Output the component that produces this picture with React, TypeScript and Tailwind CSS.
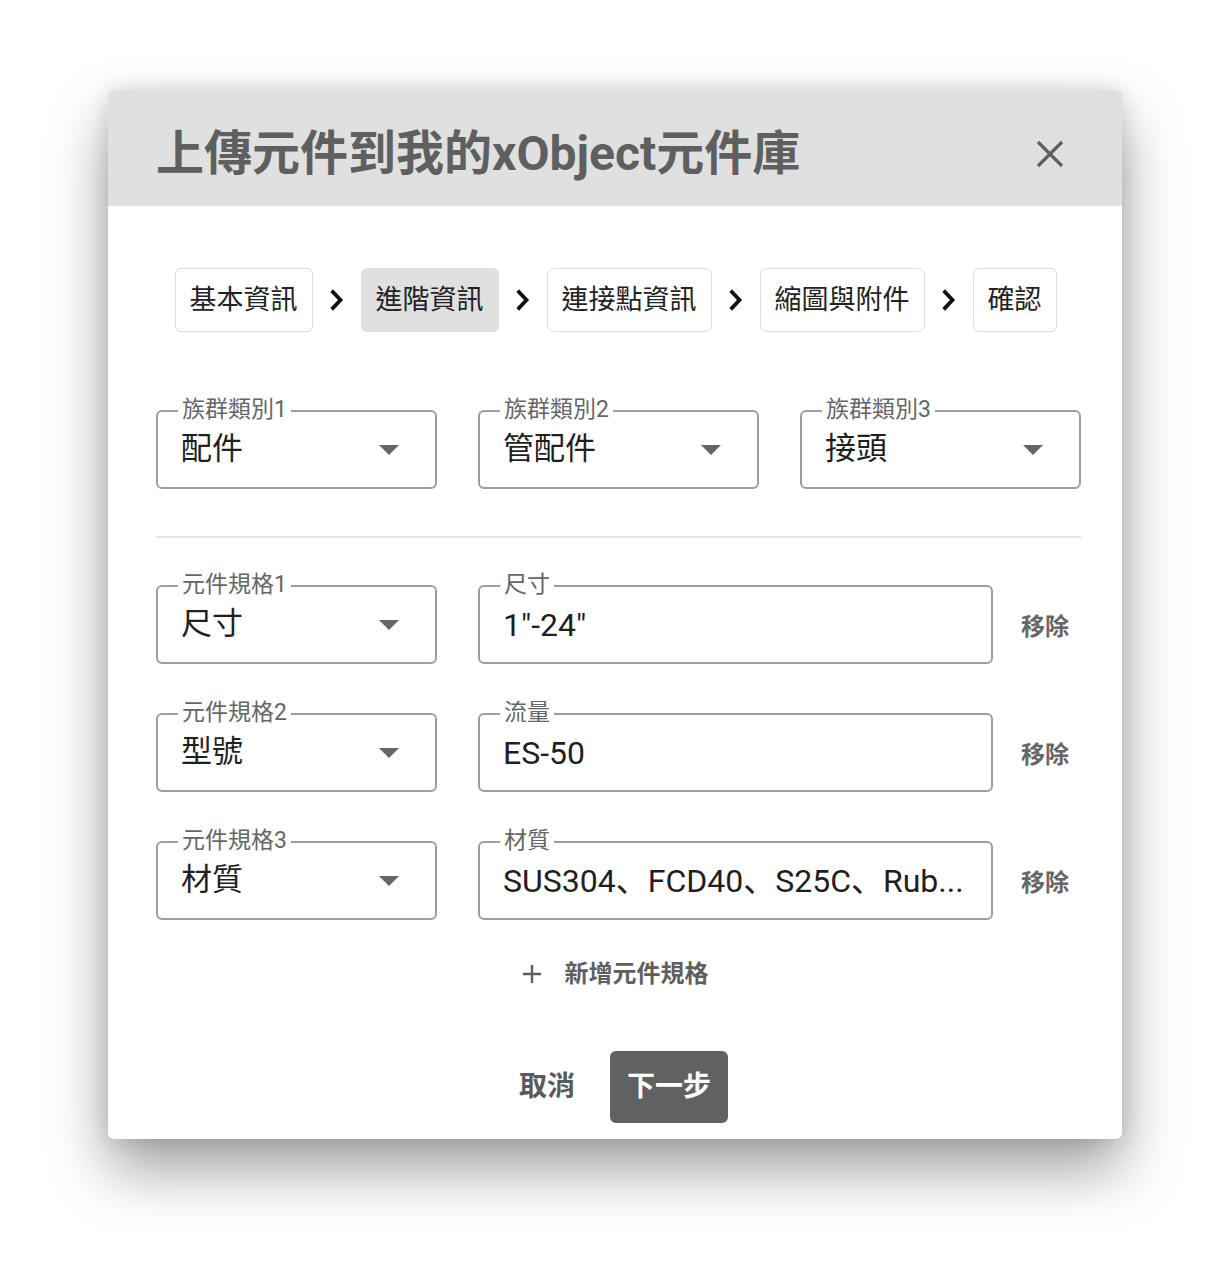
import React from "react";

const font = { fontFamily: 'Roboto, "Noto Sans CJK TC", sans-serif' };

const steps = ["基本資訊", "進階資訊", "連接點資訊", "縮圖與附件", "確認"];

function Chevron() {
  return (
    <svg width="14" height="22" viewBox="0 0 14 22" className="shrink-0">
      <path d="M3 3 L10.5 11 L3 19" fill="none" stroke="#111" strokeWidth="3.8" strokeLinecap="square" />
    </svg>
  );
}

function Caret() {
  return (
    <svg width="20" height="10" viewBox="0 0 20 10" className="shrink-0">
      <path d="M0 0 L20 0 L10 10 Z" fill="#666" />
    </svg>
  );
}

function SelectBox({ label, value }: { label: string; value: string }) {
  return (
    <div className="relative flex h-[79px] w-[281px] shrink-0 items-center justify-between rounded-md border-2 border-[#9e9e9e] pl-[23px] pr-[36px]">
      <span className="absolute -top-[16px] left-[20px] bg-white px-[4px] text-[23px] leading-[28px] text-[#666]">{label}</span>
      <span className="text-[31px] text-[#1f1f1f]">{value}</span>
      <Caret />
    </div>
  );
}

function TextBox({ label, value, jp }: { label: string; value: string; jp?: boolean }) {
  return (
    <div className="relative flex h-[79px] w-[515px] shrink-0 items-center rounded-md border-2 border-[#9e9e9e] pl-[23px] pr-[23px]">
      <span className="absolute -top-[16px] left-[20px] bg-white px-[4px] text-[23px] leading-[28px] text-[#666]">{label}</span>
      <span
        className="truncate text-[32px] text-[#1f1f1f]"
        style={jp ? { fontFamily: 'Roboto, "Noto Sans CJK JP", sans-serif' } : undefined}
      >
        {value}
      </span>
    </div>
  );
}

const specs = [
  { label: "元件規格1", value: "尺寸", field: "尺寸", text: '1"-24"' },
  { label: "元件規格2", value: "型號", field: "流量", text: "ES-50" },
  { label: "元件規格3", value: "材質", field: "材質", text: "SUS304、FCD40、S25C、Rub...", jp: true },
];

export default function App() {
  return (
    <div className="min-h-[1268px] bg-white pt-[90px]" style={font}>
      <div className="mx-auto w-[1014px] overflow-hidden rounded-md bg-white shadow-[0_30px_60px_rgba(0,0,0,0.38),0_0_20px_rgba(0,0,0,0.12)]">
        <div className="flex h-[116px] items-center justify-between bg-[#e0e0e0] pl-[48px] pr-[57px] pt-[12px]">
          <h1 className="text-[48px] font-bold text-[#5f5f5f]">上傳元件到我的xObject元件庫</h1>
          <svg width="30" height="30" viewBox="0 0 30 30">
            <path d="M3 3 L27 27 M27 3 L3 27" stroke="#5f5f5f" strokeWidth="3.2" />
          </svg>
        </div>

        <div className="pl-[48px] pr-[41px] pt-[62px] pb-[16px]">
          <div className="flex items-center justify-center gap-[17px] pr-[6px]">
            {steps.map((s, i) => (
              <React.Fragment key={s}>
                {i > 0 && <Chevron />}
                <div
                  className={
                    "flex h-[64px] items-center rounded-md px-[14px] text-[27px] text-[#222] " +
                    (i === 1 ? "border border-[#e0e0e0] bg-[#e0e0e0]" : "border border-[#dcdcdc] bg-white")
                  }
                >
                  {s}
                </div>
              </React.Fragment>
            ))}
          </div>

          <div className="mt-[78px] flex gap-[41px]">
            <SelectBox label="族群類別1" value="配件" />
            <SelectBox label="族群類別2" value="管配件" />
            <SelectBox label="族群類別3" value="接頭" />
          </div>

          <div className="my-[47px] h-[2px] bg-[#e3e3e3]" />

          <div className="flex flex-col gap-[49px]">
            {specs.map((r) => (
              <div key={r.label} className="flex items-center">
                <SelectBox label={r.label} value={r.value} />
                <div className="ml-[41px]">
                  <TextBox label={r.field} value={r.text} jp={r.jp} />
                </div>
                <button className="ml-[28px] pt-[4px] text-[24px] font-bold text-[#666]">移除</button>
              </div>
            ))}
          </div>

          <div className="mt-[36px] flex justify-center pr-[7px]">
            <button className="flex items-center gap-[23px] text-[24px] font-bold text-[#5f5f5f]">
              <svg width="20" height="20" viewBox="0 0 20 20">
                <path d="M10 1 V19 M1 10 H19" stroke="#5f5f5f" strokeWidth="2.4" />
              </svg>
              新增元件規格
            </button>
          </div>

          <div className="mt-[59px] flex justify-center gap-[18px] pr-[7px]">
            <button className="flex h-[72px] items-center rounded-md px-[17px] text-[28px] font-bold text-[#5a5a5a]">取消</button>
            <button className="flex h-[72px] items-center rounded-md bg-[#616161] px-[17px] text-[28px] font-bold text-white">下一步</button>
          </div>
        </div>
      </div>
    </div>
  );
}
